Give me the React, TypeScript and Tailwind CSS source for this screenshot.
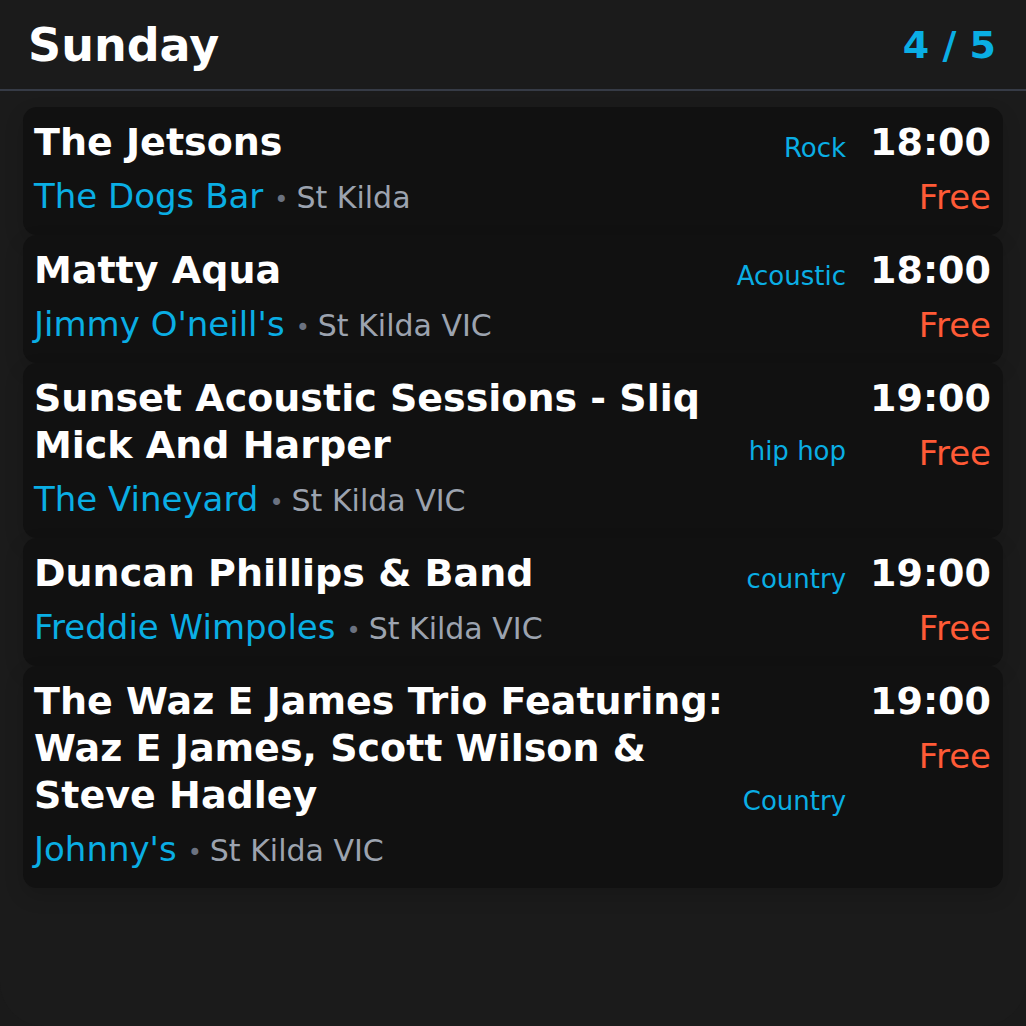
import React from "react";

type Gig = {
  title: string;
  genre: string;
  venue: string;
  area: string;
  time: string;
  price: string;
};

const gigs: Gig[] = [
  { title: "The Jetsons", genre: "Rock", venue: "The Dogs Bar", area: "St Kilda", time: "18:00", price: "Free" },
  { title: "Matty Aqua", genre: "Acoustic", venue: "Jimmy O'neill's", area: "St Kilda VIC", time: "18:00", price: "Free" },
  { title: "Sunset Acoustic Sessions - Sliq Mick And Harper", genre: "hip hop", venue: "The Vineyard", area: "St Kilda VIC", time: "19:00", price: "Free" },
  { title: "Duncan Phillips & Band", genre: "country", venue: "Freddie Wimpoles", area: "St Kilda VIC", time: "19:00", price: "Free" },
  { title: "The Waz E James Trio Featuring: Waz E James, Scott Wilson & Steve Hadley", genre: "Country", venue: "Johnny's", area: "St Kilda VIC", time: "19:00", price: "Free" },
];

function Card({ g }: { g: Gig }) {
  return (
    <div className="flex rounded-[14px] bg-[#111111] pl-[11px] pr-3 pt-3 pb-4 shadow-[0_8px_20px_rgba(0,0,0,0.14)]">
      <div className="min-w-0 flex-1">
        <div className="flex items-end gap-3">
          <div className="min-w-0 flex-1 text-[38px] font-bold leading-[47px] text-white">{g.title}</div>
          <div className="shrink-0 text-[26px] leading-[35px] text-[#0aaee4]">{g.genre}</div>
        </div>
        <div className="mt-[7px] h-[46px] whitespace-nowrap text-[34px] leading-[46px]">
          <span className="text-[#0aaee4]">{g.venue}</span>
          <span className="ml-[11px] mr-[8px] text-[24px] leading-none text-[#6b7280]">•</span>
          <span className="text-[30px] leading-none text-[#9ca3af]">{g.area}</span>
        </div>
      </div>
      <div className="ml-6 flex shrink-0 flex-col items-end">
        <div className="text-[38px] font-bold leading-[47px] text-white">{g.time}</div>
        <div className="mt-[10px] text-[34px] leading-[42px] text-[#ff5a36]">{g.price}</div>
      </div>
    </div>
  );
}

export default function App() {
  return (
    <div className="min-h-[1026px] w-full bg-[#1a1a1a] font-['DejaVu_Sans',sans-serif]">
      <div className="h-[1026px] w-full overflow-hidden rounded-b-[44px] bg-[#1b1b1b]">
        <div className="flex h-[91px] items-center justify-between border-b-2 border-[#363b46] pl-[28px] pr-[30px]">
          <div className="text-[46px] font-bold leading-none text-white">Sunday</div>
          <div className="text-[38px] font-bold leading-none text-[#0aaee4]">4 / 5</div>
        </div>
        <div className="flex flex-col px-[23px] pt-4">
          {gigs.map((g, i) => (
            <Card key={i} g={g} />
          ))}
        </div>
      </div>
    </div>
  );
}
